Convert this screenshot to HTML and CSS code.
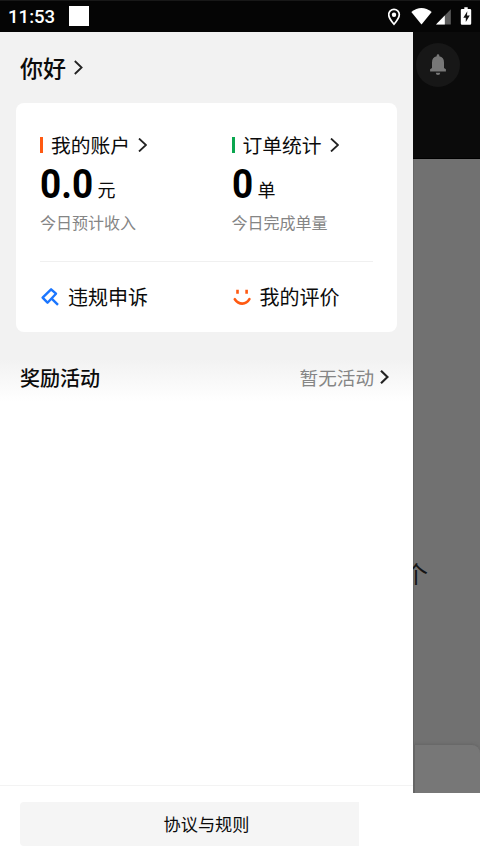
FILE: index.html
```html
<!DOCTYPE html>
<html lang="zh-CN">
<head>
<meta charset="utf-8">
<title>我的</title>
<link rel="stylesheet" href="styles.css">
</head>
<body>
<div class="screen">
  <header class="status">
    <span class="clock">11:53</span><span class="notice"></span>
    <svg class="indicators" width="92" height="32" viewBox="0 0 92 32">
      <path d="M6 8.300a5.300 5.300 0 0 1 5.300 5.300C11.300 17.300 6 23.200 6 23.200S.7 17.300 .7 13.600A5.300 5.300 0 0 1 6 8.300z" fill="none" stroke="#fff" stroke-width="1.700"/>
      <circle cx="6" cy="13.700" r="2.200" fill="#fff"/>
      <path d="M23.300 11Q33.500 3 43.700 11L33.500 23.500z" fill="#fff"/>
      <path d="M62.800 8.300V23.500H48z" fill="#5c5c5c"/>
      <path d="M56.800 14.500V23.500H48z" fill="#fff"/>
      <path d="M76.300 6.200h3.400V7.900h2.300q1.200 0 1.200 1.200V22.600q0 1.200-1.200 1.200h-8q-1.200 0-1.200-1.200V9.100q0-1.200 1.200-1.200h2.300z" fill="#fff"/>
      <path d="M79.300 10.200l-4 6.500h2.500V21l4-6.500H79z" fill="#111"/>
    </svg>
  </header>
  <div class="stage">
    <main class="drawer">
      <h1 class="greeting">你好<svg class="chevron" width="9" height="15" viewBox="0 0 9 15"><path d="M.8 1l6.800 6.500L.8 14"/></svg></h1>
      <section class="card">
        <div class="stats">
          <div class="stat">
            <h2 class="stat-title orange">我的账户<svg class="chevron" width="9" height="14" viewBox="0 0 9 14"><path d="M1 .5L8 7l-7 6.500"/></svg></h2>
            <div class="value"><b class="income">0.0</b><span>元</span></div>
            <p class="caption">今日预计收入</p>
          </div>
          <div class="stat">
            <h2 class="stat-title green">订单统计<svg class="chevron" width="9" height="14" viewBox="0 0 9 14"><path d="M1 .5L8 7l-7 6.500"/></svg></h2>
            <div class="value"><b class="orders">0</b><span>单</span></div>
            <p class="caption">今日完成单量</p>
          </div>
        </div>
        <div class="links">
          <div class="link">
            <svg width="20" height="20" viewBox="0 0 20 20" fill="none" stroke="#1b76ff" stroke-width="2.400" stroke-linejoin="round"><path d="M2.600 10.700L11.100 2.300l4.900 4.400-8.500 9zM11.400 11.400l6.600 6.500"/></svg>
            <span>违规申诉</span>
          </div>
          <div class="link">
            <svg width="20" height="20" viewBox="0 0 20 20" fill="none" stroke="#ff5a12" stroke-width="2.600"><path d="M5.500 2.700v4M14.600 2.700v4"/><path d="M2.800 12.200Q5.800 16.600 10.300 16.600T17.400 12.200" stroke-linecap="round"/></svg>
            <span>我的评价</span>
          </div>
        </div>
      </section>
      <section class="rewards">
        <h2>奖励活动</h2>
        <span class="none">暂无活动<svg class="chevron strong" width="9" height="14" viewBox="0 0 9 14"><path d="M1 .8L7.500 7 1 13.200"/></svg></span>
      </section>
    </main>
    <aside class="backdrop">
      <div class="topbar">
        <div class="bell"><svg width="18" height="22" viewBox="0 0 18 22" fill="#777"><path d="M7.700 2.300V1.500a1.300 1.300 0 0 1 2.600 0v.8q4.700 1 4.700 6.200v5.500l1.900 1.300v2.200H1.100v-2.200L3 14V8.500q0-5.200 4.700-6.200zM6.800 18.800h4.400a2.200 2.200 0 0 1-4.400 0z"/></svg></div>
      </div>
      <div class="behind"><span class="clip">个</span></div>
      <div class="sheet"></div>
    </aside>
  </div>
  <footer class="footer"><div class="rules">协议与规则</div></footer>
</div>
</body>
</html>
```
FILE: styles.css
```css
* { box-sizing: border-box; }
body { margin: 0; background: #fff; color: #0b0b0b; font-family: "Noto Sans CJK SC", sans-serif; }
h1, h2, p { margin: 0; }
.screen { width: 480px; height: 853px; overflow: hidden; display: flex; flex-direction: column; }
.status { flex: none; height: 32px; display: flex; align-items: center; padding-left: 8px; background: #050505; border-top: 1px solid #181818; color: #fff; }
.clock { width: 61px; font: 500 18.600px/32px Roboto, sans-serif; padding-top: 1px; }
.notice { width: 20px; height: 20px; margin-top: -1px; background: #fff; }
.indicators { margin-left: auto; }
.stage { flex: none; height: 761px; display: flex; }
.drawer { width: 413px; flex: none; display: flex; flex-direction: column; padding: 0 16px; background: linear-gradient(#f2f2f2 0, #f2f2f2 328px, #fff 370px); }
.drawer::after { content: ""; height: 1px; flex: none; margin: auto -16px 7px; background: #f3f3f3; }
.chevron { display: block; fill: none; stroke: #222; stroke-width: 1.800; }
.chevron.strong { stroke-width: 2.200; }
.greeting { height: 70.500px; padding: 0 0 1px 4px; display: flex; align-items: center; gap: 8px; font-size: 23px; line-height: 34px; font-weight: 500; }
.greeting .chevron { margin-top: 2px; }
.card { height: 229.500px; background: #fff; border-radius: 8px; padding: 27.500px 24px 0; }
.stats { height: 131.500px; display: flex; border-bottom: 1px solid #f0f0f0; }
.stat { width: 191.500px; flex: none; }
.stat-title { height: 30px; display: flex; align-items: center; font-size: 19.800px; line-height: 30px; font-weight: 400; white-space: nowrap; }
.stat-title::before { content: ""; width: 3px; height: 16px; margin-right: 8px; background: #ff5a12; }
.stat-title.green::before { background: #0aa64f; }
.stat-title .chevron { margin-left: 8px; }
.value { height: 47px; display: flex; align-items: baseline; }
.value b { font: 700 41.500px/47px Roboto, sans-serif; color: #000; transform: scaleX(.89); transform-origin: left; }
.income { width: 57.500px; }
.orders { width: 26px; }
.value span { font-size: 18px; line-height: 30px; transform: translateY(-1.500px); }
.caption { font-size: 16px; line-height: 24px; color: #858585; padding-top: 3px; }
.links { display: flex; padding-top: 19px; }
.link { width: 191.500px; flex: none; display: flex; align-items: center; gap: 8px; font-size: 20px; line-height: 32px; }
.rewards { display: flex; justify-content: space-between; align-items: center; height: 30px; margin-top: 31px; padding: 0 8px 0 4px; }
.rewards h2 { font-size: 20px; line-height: 30px; font-weight: 500; }
.none { display: flex; align-items: center; gap: 6px; margin-top: -2px; font-size: 18.600px; line-height: 30px; color: #858585; }
.backdrop { flex: 1; min-width: 0; display: flex; flex-direction: column; background: #717171; overflow: hidden; }
.topbar { height: 127px; flex: none; background: #0b0b0b; border-bottom: 1px solid #000; padding: 11px 0 0 3px; }
.bell { width: 44px; height: 44px; border-radius: 50%; background: #171717; display: grid; place-items: center; }
.behind { flex: 1; padding-top: 397px; border-left: 1px solid #666; }
.clip { display: block; width: 24px; margin-left: -10px; font-size: 24px; line-height: 34px; color: #151515; }
.sheet { height: 48px; flex: none; background: #777; border-radius: 0 8px 0 0; border-left: 2px solid #666; box-shadow: 0 -1px 3px #656565; }
.footer { flex: none; height: 60px; padding: 9px 20px 0; }
.rules { width: 339px; height: 44px; padding-left: 34px; background: #f5f5f5; border-radius: 4px 0 0 4px; font-size: 17.200px; line-height: 44px; text-align: center; }
```
